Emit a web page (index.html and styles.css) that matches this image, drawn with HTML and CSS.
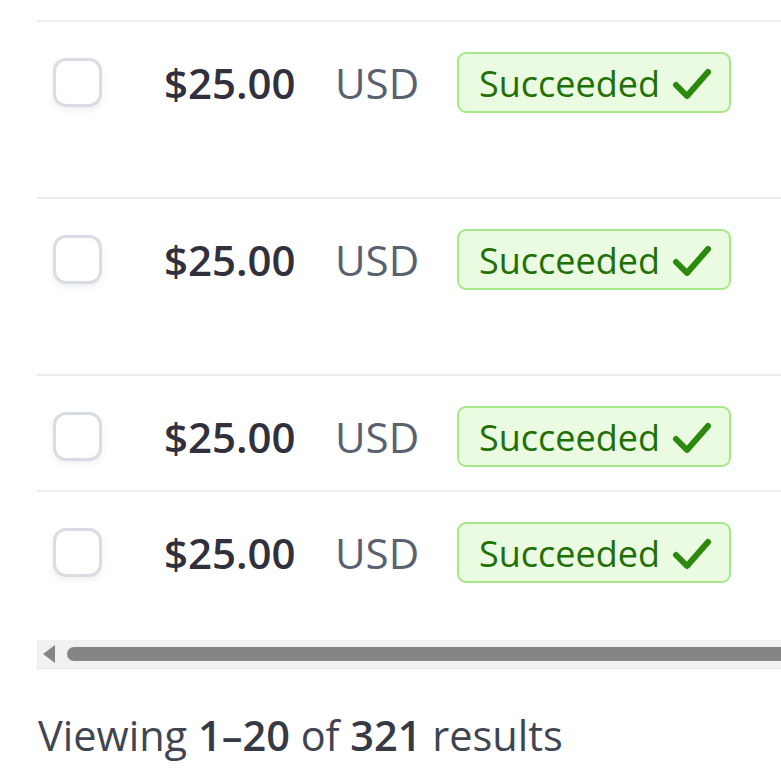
FILE: index.html
```html
<!DOCTYPE html>
<html>
<head>
<meta charset="utf-8">
<link rel="stylesheet" href="styles.css">
</head>
<body>
<div class="page">
  <div class="table-wrap">
    <div class="table">
      <div class="row tall">
        <div class="cell check"><span class="checkbox"></span></div>
        <div class="cell amount">$25.00</div>
        <div class="cell currency">USD</div>
        <div class="cell status"><span class="badge">Succeeded<svg class="tick" viewBox="0 0 40 34" width="40" height="34"><path d="M4 19 L15 30 L36 6" fill="none" stroke="currentColor" stroke-width="6" stroke-linecap="round" stroke-linejoin="round"/></svg></span></div>
      </div>
      <div class="row tall">
        <div class="cell check"><span class="checkbox"></span></div>
        <div class="cell amount">$25.00</div>
        <div class="cell currency">USD</div>
        <div class="cell status"><span class="badge">Succeeded<svg class="tick" viewBox="0 0 40 34" width="40" height="34"><path d="M4 19 L15 30 L36 6" fill="none" stroke="currentColor" stroke-width="6" stroke-linecap="round" stroke-linejoin="round"/></svg></span></div>
      </div>
      <div class="row">
        <div class="cell check"><span class="checkbox"></span></div>
        <div class="cell amount">$25.00</div>
        <div class="cell currency">USD</div>
        <div class="cell status"><span class="badge">Succeeded<svg class="tick" viewBox="0 0 40 34" width="40" height="34"><path d="M4 19 L15 30 L36 6" fill="none" stroke="currentColor" stroke-width="6" stroke-linecap="round" stroke-linejoin="round"/></svg></span></div>
      </div>
      <div class="row last">
        <div class="cell check"><span class="checkbox"></span></div>
        <div class="cell amount">$25.00</div>
        <div class="cell currency">USD</div>
        <div class="cell status"><span class="badge">Succeeded<svg class="tick" viewBox="0 0 40 34" width="40" height="34"><path d="M4 19 L15 30 L36 6" fill="none" stroke="currentColor" stroke-width="6" stroke-linecap="round" stroke-linejoin="round"/></svg></span></div>
      </div>
    </div>
    <div class="scrollbar">
      <span class="arrow"></span>
      <span class="thumb"></span>
    </div>
  </div>
  <p class="summary">Viewing <b>1–20</b> of <b>321</b> results</p>
</div>
</body>
</html>
```

FILE: styles.css
```css
html, body {
  margin: 0;
  padding: 0;
  background: #ffffff;
}

body {
  font-family: "Open Sans", "Noto Sans", sans-serif;
  overflow: hidden;
}

.page {
  padding: 20px 0 0 37px;
}

.table-wrap {
  overflow: hidden;
}

.table {
  display: flex;
  flex-direction: column;
}

.row {
  display: flex;
  align-items: flex-start;
  border-top: 2px solid #ebeef1;
  padding: 30px 0 23px 0;
  height: 61px;
}

.row.tall {
  height: 122px;
}

.cell {
  display: flex;
  align-items: center;
  height: 61px;
  font-size: 42px;
  white-space: nowrap;
}

.check {
  width: 127px;
  padding-left: 16px;
  box-sizing: border-box;
}

.checkbox {
  display: block;
  width: 49px;
  height: 49px;
  box-sizing: border-box;
  border: 3px solid #d8dde4;
  border-radius: 13px;
  background: #fff;
  box-shadow: 0 3px 6px rgba(64, 68, 82, 0.08);
}

.amount {
  width: 171px;
  font-weight: 600;
  color: #30313d;
}

.currency {
  width: 122px;
  color: #596171;
}

.badge {
  display: flex;
  align-items: center;
  height: 61px;
  box-sizing: border-box;
  padding: 1px 17px 0 20px;
  background: #ebfbe2;
  border: 2.5px solid #a6e78a;
  border-radius: 9px;
  color: #217005;
  font-size: 36px;
  gap: 12px;
}

.tick {
  color: #2b8a0c;
}

.scrollbar {
  position: relative;
  margin-top: 34px;
  height: 28px;
  background: #f1f1f1;
  border-bottom: 1px solid #e6e6e6;
  display: flex;
  align-items: center;
}

.arrow {
  width: 0;
  height: 0;
  margin-left: 6px;
  border-top: 9px solid transparent;
  border-bottom: 9px solid transparent;
  border-right: 12px solid #858585;
}

.thumb {
  flex: 1;
  margin-left: 12px;
  height: 14px;
  border-radius: 7px 0 0 7px;
  background: #858585;
}

.summary {
  margin: 38px 0 0 1px;
  font-size: 41.5px;
  color: #414552;
}

.summary b {
  font-weight: 600;
  color: #353a44;
}
```
